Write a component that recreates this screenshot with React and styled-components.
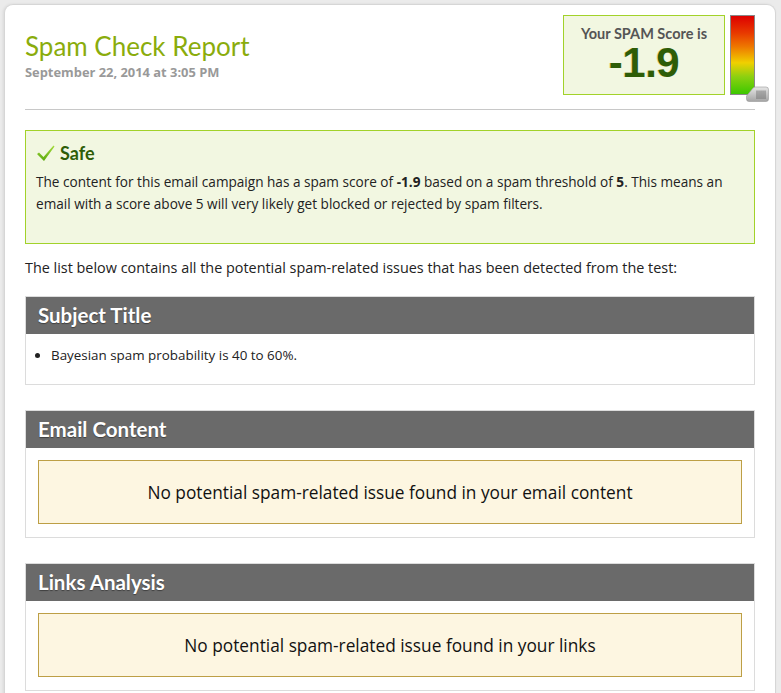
import styled, { createGlobalStyle } from "styled-components";

const GlobalStyle = createGlobalStyle`
  html, body {
    margin: 0;
    padding: 0;
    background: #ebebeb;
  }
  body {
    font-family: "Open Sans", "Liberation Sans", sans-serif;
    color: #222;
  }
`;

const Page = styled.div`
  padding: 4px 5px 0 4px;
  height: 689px;
  overflow: hidden;
`;

const Card = styled.main`
  background: #fff;
  border: 1px solid #d6d6d6;
  border-bottom: none;
  border-radius: 9px 9px 0 0;
  box-shadow: -1px 0 3px rgba(0, 0, 0, 0.08);
  padding: 10px 20px 0 20px;
  min-height: 700px;
`;

const Header = styled.header`
  display: flex;
  justify-content: space-between;
  align-items: flex-start;
`;

const TitleBlock = styled.div`
  padding-top: 17px;
`;

const Title = styled.h1`
  margin: 0;
  font-family: Lato, "Liberation Sans", sans-serif;
  font-size: 26px;
  line-height: 28px;
  font-weight: 400;
  color: #8aac0c;
`;

const DateLine = styled.div`
  font-size: 12.9px;
  font-weight: 700;
  color: #999;
  margin-top: 3px;
`;

const ScoreWrap = styled.div`
  display: flex;
  gap: 5px;
`;

const ScoreBox = styled.div`
  box-sizing: border-box;
  width: 162px;
  height: 80px;
  border: 1px solid #a2d22a;
  background: #f2f7e1;
  text-align: center;
  padding-top: 9px;
`;

const ScoreLabel = styled.div`
  font-family: Lato, "Liberation Sans", sans-serif;
  font-size: 14.5px;
  font-weight: 700;
  color: #555;
`;

const ScoreValue = styled.div`
  font-family: "Liberation Sans", Arial, sans-serif;
  font-size: 42px;
  line-height: 42px;
  font-weight: 700;
  color: #2e5d07;
  text-shadow: -1px 0 0 rgba(220, 150, 0, 0.35);
  letter-spacing: -0.5px;
`;

const Gauge = styled.div`
  position: relative;
  box-sizing: border-box;
  width: 25px;
  height: 80px;
  border: 1px solid #888;
  background: linear-gradient(
    to bottom,
    #dd0000 0%,
    #e83a00 22%,
    #ee7a00 40%,
    #f0d000 60%,
    #8cd010 78%,
    #3cc800 100%
  );
`;

const Handle = styled.div`
  position: absolute;
  right: -15px;
  bottom: -7px;
  width: 23px;
  height: 16px;
`;

const Divider = styled.hr`
  margin: 14px 0 0 0;
  border: none;
  border-top: 1px solid #c8c8c8;
`;

const SafeBox = styled.section`
  margin-top: 20px;
  border: 1px solid #a2d22a;
  background: #f2f7e1;
  padding: 10px 10px 28px 10px;
`;

const SafeHeading = styled.h2`
  display: flex;
  align-items: center;
  gap: 4px;
  margin: 0 0 6px 0;
  font-family: Lato, "Liberation Sans", sans-serif;
  font-size: 18px;
  line-height: 24px;
  font-weight: 700;
  color: #2e5d07;
`;

const Text = styled.p`
  margin: ${(p) => p.$margin || "0"};
  font-size: ${(p) => p.$size || 14}px;
  line-height: 22px;
  color: #222;
`;

const Section = styled.section`
  margin-top: ${(p) => p.$top || 25}px;
  border: 1px solid #dcdcdc;
`;

const SectionHeader = styled.h3`
  margin: 0;
  background: #6a6a6a;
  color: #fff;
  font-family: Lato, "Liberation Sans", sans-serif;
  font-size: 20.5px;
  font-weight: 700;
  line-height: 37px;
  height: 37px;
  padding-left: 12px;
  text-shadow: 0 1px 1px rgba(0, 0, 0, 0.4);
`;

const IssueList = styled.ul`
  margin: 0;
  padding: 10px 10px 18px 25px;
  font-size: 13.4px;
  line-height: 22px;
`;

const SectionBody = styled.div`
  padding: 12px 12px 13px 12px;
`;

const Notice = styled.div`
  height: 62px;
  border: 1px solid #bd9f45;
  background: #fdf6e1;
  display: flex;
  align-items: center;
  justify-content: center;
  font-size: 17.3px;
  color: #111;
`;

function CheckIcon() {
  return (
    <svg width="20" height="18" viewBox="0 0 20 18">
      <defs>
        <linearGradient id="chk" x1="0" y1="0" x2="0" y2="1">
          <stop offset="0" stopColor="#a6dc3c" />
          <stop offset="1" stopColor="#5aa80e" />
        </linearGradient>
      </defs>
      <path
        d="M1 10 L3 8.5 L7.5 13 L17.5 1.5 L18.5 2.5 L8 17 Z"
        fill="url(#chk)"
      />
    </svg>
  );
}

function GaugeHandle() {
  return (
    <svg width="23" height="16" viewBox="0 0 23 16">
      <defs>
        <linearGradient id="hdl" x1="0" y1="0" x2="0" y2="1">
          <stop offset="0" stopColor="#e6e6e6" />
          <stop offset="1" stopColor="#a4a4a4" />
        </linearGradient>
      </defs>
      <path
        d="M0.5 10 L7 2 Q8 1 9.5 1 L20 1 Q22.5 1 22.5 3.5 L22.5 13 Q22.5 15.5 20 15.5 L3 15.5 Q0.5 15.5 0.5 13 Z"
        fill="url(#hdl)"
        stroke="#999"
        strokeWidth="0.6"
      />
      {[11, 13, 15, 17, 19].map((x) => (
        <line key={x} x1={x} y1="4.5" x2={x} y2="13" stroke="#666" strokeWidth="0.8" />
      ))}
    </svg>
  );
}

const sections = [
  { title: "Email Content", notice: "No potential spam-related issue found in your email content" },
  { title: "Links Analysis", notice: "No potential spam-related issue found in your links" },
];

export default function App() {
  return (
    <Page>
      <GlobalStyle />
      <Card>
        <Header>
          <TitleBlock>
            <Title>Spam Check Report</Title>
            <DateLine>September 22, 2014 at 3:05 PM</DateLine>
          </TitleBlock>
          <ScoreWrap>
            <ScoreBox>
              <ScoreLabel>Your SPAM Score is</ScoreLabel>
              <ScoreValue>-1.9</ScoreValue>
            </ScoreBox>
            <Gauge>
              <Handle>
                <GaugeHandle />
              </Handle>
            </Gauge>
          </ScoreWrap>
        </Header>
        <Divider />

        <SafeBox>
          <SafeHeading>
            <CheckIcon />
            Safe
          </SafeHeading>
          <Text $size={13.6}>
            The content for this email campaign has a spam score of <b>-1.9</b> based on a
            spam threshold of <b>5</b>. This means an email with a score above 5 will very
            likely get blocked or rejected by spam filters.
          </Text>
        </SafeBox>

        <Text $margin="13px 0 0 0" $size={14.4}>
          The list below contains all the potential spam-related issues that has been
          detected from the test:
        </Text>

        <Section $top={17}>
          <SectionHeader>Subject Title</SectionHeader>
          <IssueList>
            <li>Bayesian spam probability is 40 to 60%.</li>
          </IssueList>
        </Section>

        {sections.map((s) => (
          <Section key={s.title}>
            <SectionHeader>{s.title}</SectionHeader>
            <SectionBody>
              <Notice>{s.notice}</Notice>
            </SectionBody>
          </Section>
        ))}
      </Card>
    </Page>
  );
}
